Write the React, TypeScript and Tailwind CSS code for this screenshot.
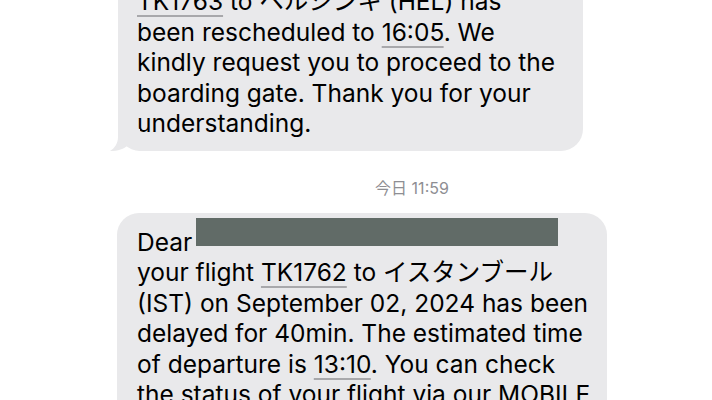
import React from 'react'

const Link = ({ children }: { children: React.ReactNode }) => (
  <span className="underline decoration-[#a8a8ab] decoration-[1.5px] underline-offset-[5px]">{children}</span>
)

const Tail = () => (
  <svg className="absolute left-[-8px] bottom-0" width="30" height="22" viewBox="0 0 30 22">
    <path d="M8 0 L8 8 C8 14 5 19 0 22 C8 22 14 20 18 16 L30 22 L30 0 Z" fill="#e9e9eb" />
  </svg>
)

const App = () => {
  return (
    <div
      className="w-[712px] h-[400px] overflow-hidden bg-white pl-[118px] pr-[6px]"
      style={{ fontFamily: 'Inter, "Noto Sans CJK JP", sans-serif' }}
    >
      {/* earlier message, cut off at the top */}
      <div className="relative mt-[-40px] w-[465px] rounded-[22px] bg-[#e9e9eb] pl-[19px] pr-3 pt-[26px] pb-[12px] text-[24.5px] leading-[30.5px] text-black">
        <div className="whitespace-nowrap"><Link>TK1763</Link> to ヘルシンキ (HEL) has</div>
        <div className="whitespace-nowrap">been rescheduled to <Link>16:05</Link>. We</div>
        <div className="whitespace-nowrap">kindly request you to proceed to the</div>
        <div className="whitespace-nowrap">boarding gate. Thank you for your</div>
        <div className="whitespace-nowrap">understanding.</div>
        <Tail />
      </div>

      <div className="mt-[28px] mb-[16px] text-center text-[16px] leading-[18px] text-[#8e8e93]">今日 11:59</div>

      <div className="ml-[-1px] w-[490px] rounded-[22px] bg-[#e9e9eb] pl-[20px] pr-3 pt-[10px] pb-[10px] text-[24.5px] leading-[30.5px] text-black">
        <div className="whitespace-nowrap">
          Dear <span className="relative top-[-5px] ml-[-3px] inline-block h-[28px] w-[362px] bg-[#616b67] align-baseline" />
        </div>
        <div className="whitespace-nowrap">your flight <Link>TK1762</Link> to イスタンブール</div>
        <div className="whitespace-nowrap">(IST) on September 02, 2024 has been</div>
        <div className="whitespace-nowrap">delayed for 40min. The estimated time</div>
        <div className="whitespace-nowrap">of departure is <Link>13:10</Link>. You can check</div>
        <div className="whitespace-nowrap">the status of your flight via our MOBILE</div>
        <div className="whitespace-nowrap">APP.</div>
      </div>
    </div>
  )
}

export default App
